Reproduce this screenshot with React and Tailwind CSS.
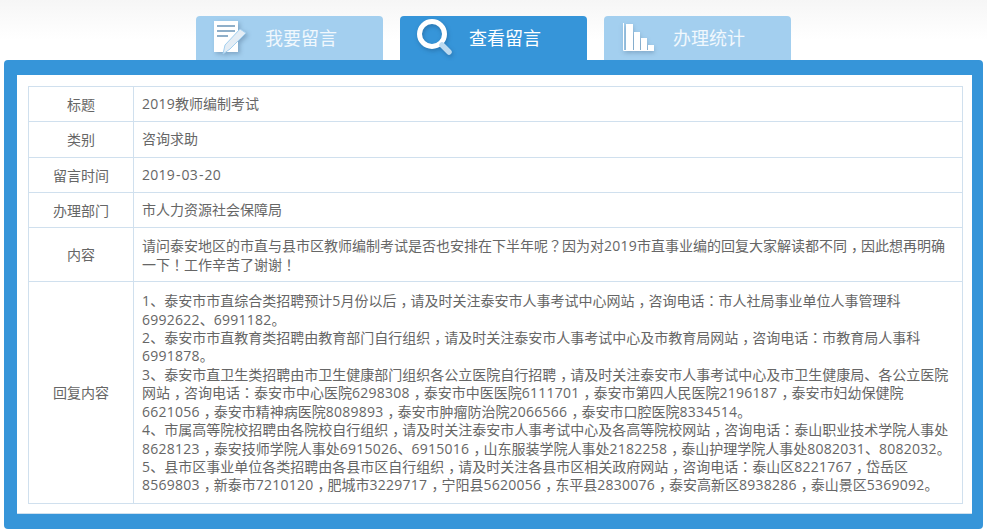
const font = { fontFamily: '"Open Sans", "Noto Sans CJK SC", sans-serif' };

const rows = [
  { label: "标题", h: "h-[35px]", lines: ["2019教师编制考试"] },
  { label: "类别", h: "h-[36px]", lines: ["咨询求助"] },
  { label: "留言时间", h: "h-[35px]", lines: ["2019-03-20"] },
  { label: "办理部门", h: "h-[35px]", lines: ["市人力资源社会保障局"] },
  {
    label: "内容",
    h: "h-[54px]",
    lines: [
      "请问泰安地区的市直与县市区教师编制考试是否也安排在下半年呢？因为对2019市直事业编的回复大家解读都不同，因此想再明确",
      "一下！工作辛苦了谢谢！",
    ],
  },
  {
    label: "回复内容",
    h: "h-[222px]",
    lines: [
      "1、泰安市市直综合类招聘预计5月份以后，请及时关注泰安市人事考试中心网站，咨询电话：市人社局事业单位人事管理科",
      "6992622、6991182。",
      "2、泰安市市直教育类招聘由教育部门自行组织，请及时关注泰安市人事考试中心及市教育局网站，咨询电话：市教育局人事科",
      "6991878。",
      "3、泰安市直卫生类招聘由市卫生健康部门组织各公立医院自行招聘，请及时关注泰安市人事考试中心及市卫生健康局、各公立医院",
      "网站，咨询电话：泰安市中心医院6298308，泰安市中医医院6111701，泰安市第四人民医院2196187，泰安市妇幼保健院",
      "6621056，泰安市精神病医院8089893，泰安市肿瘤防治院2066566，泰安市口腔医院8334514。",
      "4、市属高等院校招聘由各院校自行组织，请及时关注泰安市人事考试中心及各高等院校网站，咨询电话：泰山职业技术学院人事处",
      "8628123，泰安技师学院人事处6915026、6915016，山东服装学院人事处2182258，泰山护理学院人事处8082031、8082032。",
      "5、县市区事业单位各类招聘由各县市区自行组织，请及时关注各县市区相关政府网站，咨询电话：泰山区8221767，岱岳区",
      "8569803，新泰市7210120，肥城市3229717，宁阳县5620056，东平县2830076，泰安高新区8938286，泰山景区5369092。",
    ],
  },
];

// digits run a touch wider in the reference, and its full-width punctuation sits centred
function Line({ text }) {
  const parts = text.split(/(\d+|-|[，？！：])/).filter(Boolean);
  return (
    <div className="whitespace-nowrap">
      {parts.map((part, i) => {
        if (/^\d/.test(part)) {
          return (
            <span key={i} className="tracking-[0.25px]">
              {part}
            </span>
          );
        }
        if (part === "-") {
          return (
            <span key={i} className="mx-[1px]">
              -
            </span>
          );
        }
        if (part === "，") {
          return (
            <span key={i} className="pl-[4px] tracking-[-4px]">
              {part}
            </span>
          );
        }
        if (/[？！：]/.test(part)) {
          return (
            <span key={i} className="font-['Open_Sans','Noto_Sans_CJK_TC']">
              {part}
            </span>
          );
        }
        return <span key={i}>{part}</span>;
      })}
    </div>
  );
}

function WriteIcon() {
  return (
    <svg width="34" height="36" viewBox="0 0 34 36" className="drop-shadow-[2px_2px_2px_rgba(60,90,120,0.35)]">
      <path d="M0 1h24v31H0z" fill="#fff" />
      <path d="M3 6h18M3 11h18M3 16h11" stroke="#8fafc9" strokeWidth="2" />
      <path d="M9 34l2-9L26 9l6 4-16 16z" fill="#e4edf5" stroke="#a3cfef" strokeWidth="1" />
    </svg>
  );
}

function SearchIcon() {
  return (
    <svg width="36" height="38" viewBox="0 0 36 38" className="drop-shadow-[1px_2px_2px_rgba(20,60,100,0.35)]">
      <circle cx="15" cy="15" r="12.5" fill="none" stroke="#fff" strokeWidth="5" />
      <path d="M25 26l7 7" stroke="#bcdaf0" strokeWidth="5.5" strokeLinecap="round" />
    </svg>
  );
}

function ChartIcon() {
  return (
    <svg width="32" height="30" viewBox="0 0 32 30" className="drop-shadow-[0_2px_2px_rgba(60,90,120,0.35)]">
      <path d="M.5 0v27.5H31" fill="none" stroke="#fff" strokeWidth="1" />
      <path d="M3 1h7v26H3zM11 9h6v18h-6zM18 15h6v12h-6zM25 22h6v5h-6z" fill="#fff" />
    </svg>
  );
}

function Tab({ icon, label, active }) {
  return (
    <div
      className={`w-[187px] h-[44px] rounded-t-[4px] flex items-center ${
        active ? "bg-[#3695d9]" : "bg-[#a3cfef]"
      }`}
    >
      <div className="w-[69px] flex justify-center shrink-0">{icon}</div>
      <span className={`text-[18px] ${active ? "text-white" : "text-[#f1f8fd]"}`}>{label}</span>
    </div>
  );
}

export default function App() {
  return (
    <div
      className="w-[987px] h-[529px] overflow-hidden bg-gradient-to-b from-[#f6f6f6] to-white to-[40px] pt-[16px] text-[14px] text-[#666]"
      style={font}
    >
      {/* Tabs */}
      <div className="flex gap-[17px] pl-[196px]">
        <Tab icon={<WriteIcon />} label="我要留言" />
        <Tab icon={<SearchIcon />} label="查看留言" active />
        <Tab icon={<ChartIcon />} label="办理统计" />
      </div>

      {/* Panel */}
      <div className="ml-[4px] w-[979px] h-[469px] bg-[#3695d9] rounded-[4px] pt-[15px] pl-[13px] pr-[11px]">
        <div className="h-[439px] bg-white border-b border-[#cfe0ee] pt-[11px] pl-[11px]">
          <div className="w-[935px] border border-[#d0e0ee] border-b-0">
            {rows.map((row) => (
              <div key={row.label} className={`flex border-b border-[#d0e0ee] ${row.h}`}>
                <div className="w-[105px] shrink-0 border-r border-[#d0e0ee] flex items-center justify-center">
                  {row.label}
                </div>
                <div
                  className={`flex-1 flex flex-col justify-center pl-[8px] leading-[18.4px] ${
                    row.lines.length > 1 ? "pt-[2px]" : ""
                  }`}
                >
                  {row.lines.map((line) => (
                    <Line key={line} text={line} />
                  ))}
                </div>
              </div>
            ))}
          </div>
        </div>
      </div>
    </div>
  );
}
